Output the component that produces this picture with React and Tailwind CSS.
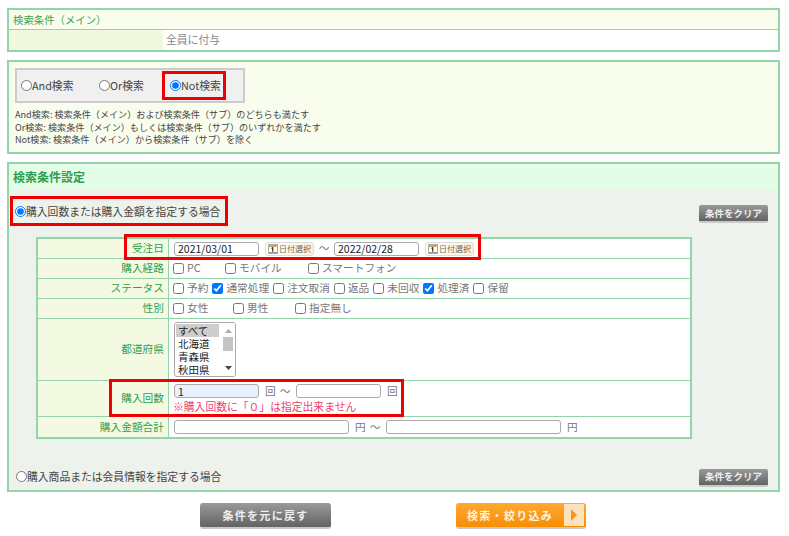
import React from "react";

const FONT = { fontFamily: '"Noto Sans CJK JP", "Noto Sans", sans-serif' };

const PREFS = ["北海道", "青森県", "秋田県", "岩手県"];

function Check({ label, checked, className = "" }) {
  return (
    <label className={"inline-flex items-center whitespace-nowrap " + className}>
      <input type="checkbox" readOnly checked={!!checked} className="m-0 mr-[3px] h-[11px] w-[11px] shrink-0 accent-[#0075ff]" />
      <span>{label}</span>
    </label>
  );
}

function TextBox({ value = "", className = "" }) {
  return (
    <input
      readOnly
      value={value}
      className={"h-[14px] shrink-0 rounded-[3px] border border-[#aaaaaa] bg-white px-[3px] text-[10.5px] leading-none text-[#222] outline-none " + className}
    />
  );
}

function DateButton() {
  return (
    <span className="mx-[6px] inline-flex h-[14px] w-[49px] shrink-0 items-center rounded-[3px] border border-[#ddd] bg-gradient-to-r from-white to-[#ffefd2] text-[8px] leading-none text-[#666]">
      <svg width="10" height="10" viewBox="0 0 10 10" className="ml-[2px] mr-px shrink-0">
        <rect x="0.5" y="0.5" width="9" height="9" fill="#fff" stroke="#aaa" />
        <rect x="1" y="1" width="8" height="2" fill="#e3a63f" />
        <rect x="1" y="8" width="8" height="1" fill="#999" />
        <path d="M3.5 4.5l1.2-.8v4" fill="none" stroke="#333" strokeWidth="1.2" />
      </svg>
      日付選択
    </span>
  );
}

function ClearButton() {
  return (
    <button className="flex h-[18px] w-[69px] items-center justify-center rounded-[2px] border-b-2 border-[#c9c9c9] bg-gradient-to-b from-[#9a9a9a] to-[#636363] text-[9.5px] font-bold text-[#eeeeee]">
      条件をクリア
    </button>
  );
}

function Row({ label, children }) {
  return (
    <div className="flex border-t border-[#93d4ab] first:border-t-0">
      <div className="flex w-[131px] shrink-0 items-center justify-end border-r border-[#93d4ab] bg-[#f4f9e2] pr-[4px] text-[10.7px] text-[#2f9e4f]">
        {label}
      </div>
      <div className="min-w-0 flex-1 bg-white pl-[5px] text-[10.7px] text-[#777]">{children}</div>
    </div>
  );
}

function PrefList() {
  return (
    <div className="relative h-[55px] w-[62px] overflow-hidden rounded-[3px] border border-[#aaa] bg-white pt-px text-[10.5px] leading-[13px] text-[#222]">
      <div className="ml-px h-[13px] w-[43px] bg-[#cdcdcd] pl-[2px]">すべて</div>
      {PREFS.map((p) => (
        <div key={p} className="pl-[3px]">{p}</div>
      ))}
      {/* listbox scrollbar */}
      <div className="absolute inset-y-0 right-0 flex w-[13px] flex-col items-center justify-between bg-white py-[6px]">
        <svg width="7" height="4" viewBox="0 0 7 4"><path d="M3.5 0l3.5 4H0z" fill="#aaa" /></svg>
        <svg width="7" height="4" viewBox="0 0 7 4"><path d="M0 0h7L3.5 4z" fill="#444" /></svg>
        <div className="absolute left-px top-[14px] h-[14px] w-[10px] bg-[#c4c4c4]" />
      </div>
    </div>
  );
}

export default function App() {
  return (
    <div className="h-[536px] w-[789px] overflow-hidden bg-white pt-2 pl-[7px]" style={FONT}>
      {/* main condition */}
      <div className="h-[44px] w-[773px] border-2 border-[#93d4ab]">
        <div className="flex h-[20px] items-center border-b border-[#93d4ab] bg-[#f9fdee] pl-[4px] text-[10.4px] text-[#35a458]">検索条件（メイン）</div>
        <div className="flex h-[20px]">
          <div className="w-[154px] bg-[#f2f8dd]" />
          <div className="flex flex-1 items-center bg-white pb-px pl-[3px] text-[10.8px] text-[#888]">全員に付与</div>
        </div>
      </div>

      {/* and / or / not */}
      <div className="mt-[8px] h-[94px] w-[773px] border-2 border-[#93d4ab] bg-[#f9fdee] pl-[6px] pt-[6px]">
        <div className="flex h-[35px] w-[230px] items-center border-2 border-[#cccccc] bg-[#f0f0f0] pl-[4px] text-[10.8px] text-[#444]">
          <label className="flex w-[78px] items-center">
            <input type="radio" readOnly checked={false} className="m-0 h-[11px] w-[11px]" />And検索
          </label>
          <label className="flex w-[63px] items-center">
            <input type="radio" readOnly checked={false} className="m-0 h-[11px] w-[11px]" />Or検索
          </label>
          <label className="flex h-[29px] w-[64px] items-center border-[3px] border-[#ee0000] pl-[5px]">
            <input type="radio" readOnly checked className="m-0 h-[11px] w-[11px] shrink-0" />
            <span className="whitespace-nowrap">Not検索</span>
          </label>
        </div>
        <div className="mt-[5px] text-[9.1px] leading-[12.6px] text-[#444]">
          <div>And検索: 検索条件（メイン）および検索条件（サブ）のどちらも満たす</div>
          <div>Or検索: 検索条件（メイン）もしくは検索条件（サブ）のいずれかを満たす</div>
          <div>Not検索: 検索条件（メイン）から検索条件（サブ）を除く</div>
        </div>
      </div>

      {/* settings */}
      <div className="mt-[8px] h-[330px] w-[773px] border-2 border-[#93d4ab] bg-[#eef2ec]">
        <div className="flex h-[26px] items-center bg-[#e3fde6] pl-[4px] text-[12px] font-bold text-[#2f9e4f]">検索条件設定</div>

        <div className="mt-[6px] flex items-start justify-between pr-[10px]">
          <label className="ml-px flex h-[30px] w-[218px] items-center border-[3px] border-[#ee0000] pl-[2px] text-[10.8px] text-[#444]">
            <input type="radio" readOnly checked className="m-0 h-[11px] w-[11px] shrink-0" />
            <span className="whitespace-nowrap">購入回数または購入金額を指定する場合</span>
          </label>
          <div className="mt-[9px]"><ClearButton /></div>
        </div>

        <div className="relative ml-[27px] mt-[11px] w-[656px] border-2 border-[#93d4ab]">
          <Row label="受注日">
            <div className="flex h-[19px] items-center">
              <TextBox value="2021/03/01" className="w-[85px]" />
              <DateButton />
              <span className="-ml-[6px] w-[20px] shrink-0 text-center">～</span>
              <TextBox value="2022/02/28" className="w-[85px]" />
              <DateButton />
            </div>
          </Row>
          <Row label="購入経路">
            <div className="-ml-px flex h-[19px] items-center">
              <Check label="PC" className="w-[52px]" />
              <Check label="モバイル" className="w-[83px]" />
              <Check label="スマートフォン" />
            </div>
          </Row>
          <Row label="ステータス">
            <div className="-ml-px flex h-[19px] items-center gap-[4px]">
              <Check label="予約" />
              <Check label="通常処理" checked />
              <Check label="注文取消" />
              <Check label="返品" />
              <Check label="未回収" />
              <Check label="処理済" checked />
              <Check label="保留" />
            </div>
          </Row>
          <Row label="性別">
            <div className="-ml-px flex h-[19px] items-center">
              <Check label="女性" className="w-[60px]" />
              <Check label="男性" className="w-[62px]" />
              <Check label="指定無し" />
            </div>
          </Row>
          <Row label="都道府県">
            <div className="flex h-[61px] items-center">
              <PrefList />
            </div>
          </Row>
          <Row label="購入回数">
            <div className="h-[35px] pt-[3px]">
              <div className="flex h-[14px] items-center">
                <TextBox value="1" className="w-[85px] !bg-[#e8f0fe]" />
                <span className="flex w-[37px] shrink-0 gap-[4px] whitespace-nowrap pl-[6px]"><span>回</span><span>～</span></span>
                <TextBox className="w-[85px]" />
                <span className="ml-[6px]">回</span>
              </div>
              <div className="-ml-px mt-px text-[10.8px] leading-[15px] text-[#ee4070]">※購入回数に「０」は指定出来ません</div>
            </div>
          </Row>
          <Row label="購入金額合計">
            <div className="flex h-[20px] items-center">
              <TextBox className="w-[175px]" />
              <span className="flex w-[37px] shrink-0 gap-[4px] whitespace-nowrap pl-[6px]"><span>円</span><span>～</span></span>
              <TextBox className="w-[175px]" />
              <span className="ml-[6px]">円</span>
            </div>
          </Row>

          {/* red highlights over the table */}
          <div className="pointer-events-none absolute left-[86px] top-[-5px] h-[26px] w-[357px] border-[3px] border-[#ee0000]" />
          <div className="pointer-events-none absolute left-[71px] top-[140px] h-[38px] w-[295px] border-[3px] border-[#ee0000]" />
        </div>

        <div className="mt-[29px] flex items-center justify-between pl-[7px] pr-[10px]">
          <label className="flex items-center pb-[3px] text-[10.8px] text-[#444]">
            <input type="radio" readOnly checked={false} className="m-0 h-[11px] w-[11px]" />
            購入商品または会員情報を指定する場合
          </label>
          <ClearButton />
        </div>
      </div>

      {/* bottom buttons */}
      <div className="mt-[11px] flex">
        <button className="ml-[193px] h-[26px] w-[131px] rounded-[3px] border-b-2 border-[#c9c9c9] bg-gradient-to-b from-[#9a9a9a] to-[#636363] text-[11px] font-bold tracking-[1.3px] text-[#eeeeee]">
          条件を元に戻す
        </button>
        <button className="ml-[125px] flex h-[26px] w-[130px] items-center rounded-[3px] border-b-2 border-[#c9c9c9] bg-gradient-to-b from-[#ffa92e] to-[#f78d00] pl-[11px] text-[11px] font-bold tracking-[1.3px] text-[#fff5e0]">
          検索・絞り込み
          <span className="ml-auto mr-[2px] flex h-[22px] w-[20px] items-center justify-center bg-[#fde3bd]">
            <svg width="8" height="12" viewBox="0 0 8 12"><path d="M1 0l6 6-6 6z" fill="#f7941d" /></svg>
          </span>
        </button>
      </div>
    </div>
  );
}
